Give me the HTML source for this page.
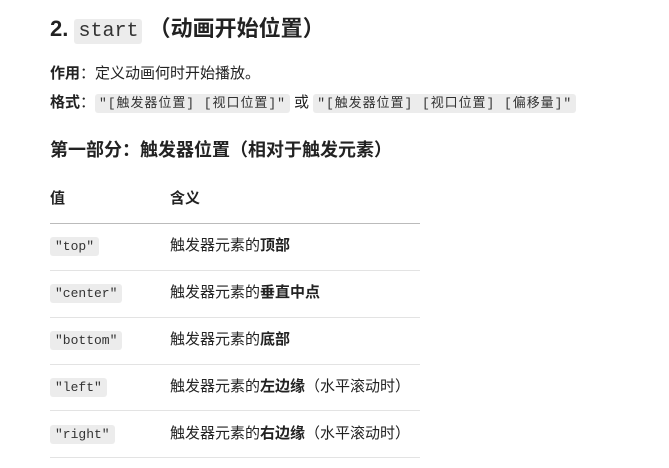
<!DOCTYPE html>
<html><head><meta charset="utf-8"><style>
body{margin:0;background:#fff;width:669px;height:468px;overflow:hidden;font-family:"Liberation Sans","Noto Sans CJK SC",sans-serif;color:#222;position:relative}
.a{position:absolute;white-space:nowrap}
code{font-family:"Liberation Mono","Noto Sans CJK SC",monospace;background:#ececec;border-radius:3px;color:#333}
.h1{left:50px;top:14px;font-size:22px;font-weight:bold;line-height:30px}
.h1 code{font-weight:normal;font-size:20px;padding:1px 4px}
.p{left:50px;font-size:15px;line-height:20px}
.p b{font-weight:bold}
.p code{font-size:13px;padding:2px 4px;letter-spacing:0.95px}
.h2{left:50px;top:138px;font-size:18px;font-weight:bold;line-height:24px}
.th{font-size:15px;font-weight:bold;line-height:20px}
.line{position:absolute;left:50px;width:370px;height:1px;background:#e3e3e3}
.td{font-size:15px;line-height:20px}
.td code{font-size:13px;padding:2px 5px}
</style></head><body>
<div class="a h1">2. <code>start</code> （动画开始位置）</div>
<div class="a p" style="top:64px"><b>作用</b>：定义动画何时开始播放。</div>
<div class="a p" style="top:93px"><b>格式</b>：<code>"[触发器位置] [视口位置]"</code> 或 <code>"[触发器位置] [视口位置] [偏移量]"</code></div>
<div class="a h2">第一部分：触发器位置（相对于触发元素）</div>
<div class="a th" style="left:50px;top:189px">值</div>
<div class="a th" style="left:170px;top:189px">含义</div>
<div class="line" style="top:223px;background:#bbb"></div>
<div class="a td" style="left:50px;top:236px"><code>"top"</code></div>
<div class="a td" style="left:170px;top:236px">触发器元素的<b>顶部</b></div>
<div class="line" style="top:270px"></div>
<div class="a td" style="left:50px;top:283px"><code>"center"</code></div>
<div class="a td" style="left:170px;top:283px">触发器元素的<b>垂直中点</b></div>
<div class="line" style="top:317px"></div>
<div class="a td" style="left:50px;top:330px"><code>"bottom"</code></div>
<div class="a td" style="left:170px;top:330px">触发器元素的<b>底部</b></div>
<div class="line" style="top:364px"></div>
<div class="a td" style="left:50px;top:377px"><code>"left"</code></div>
<div class="a td" style="left:170px;top:377px">触发器元素的<b>左边缘</b>（水平滚动时）</div>
<div class="line" style="top:410px"></div>
<div class="a td" style="left:50px;top:424px"><code>"right"</code></div>
<div class="a td" style="left:170px;top:424px">触发器元素的<b>右边缘</b>（水平滚动时）</div>
<div class="line" style="top:457px"></div>
</body></html>
